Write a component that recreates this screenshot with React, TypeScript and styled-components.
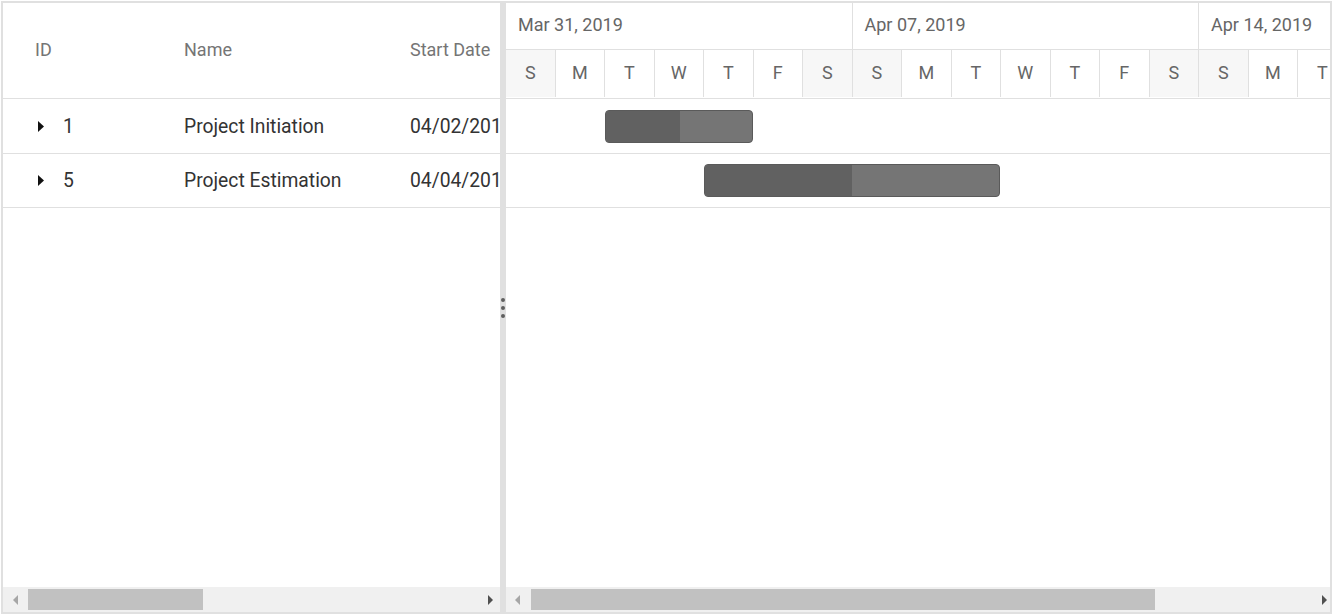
import React from "react";
import styled, { createGlobalStyle } from "styled-components";

const DAY = 49.5;

const Global = createGlobalStyle`
  html, body { margin: 0; padding: 0; background: #fff; }
  body { font-family: Roboto, "Liberation Sans", Arial, sans-serif; }
  * { box-sizing: border-box; }
`;

const Gantt = styled.div`
  margin: 1px;
  width: 1331px;
  height: 613px;
  border: 2px solid #e0e0e0;
  display: flex;
  background: #fff;
  overflow: hidden;
`;

const Pane = styled.div<{ $w: number }>`
  width: ${(p) => p.$w}px;
  flex: none;
  display: flex;
  flex-direction: column;
  overflow: hidden;
`;

const GridHeader = styled.div`
  height: 96px;
  flex: none;
  border-bottom: 1px solid #e0e0e0;
  padding-bottom: 3px;
  display: grid;
  grid-template-columns: 160px 226px 300px;
  align-items: center;
`;

const HeaderCell = styled.div<{ $pl: number }>`
  padding-left: ${(p) => p.$pl}px;
  font-size: 18px;
  color: #757575;
  white-space: nowrap;
`;

const GridRow = styled.div<{ $h: number }>`
  height: ${(p) => p.$h}px;
  flex: none;
  border-bottom: 1px solid #e0e0e0;
  display: grid;
  grid-template-columns: 160px 226px 300px;
  align-items: center;
`;

const Cell = styled.div<{ $pl: number }>`
  padding-left: ${(p) => p.$pl}px;
  font-size: 19.3px;
  color: #333;
  white-space: nowrap;
  display: flex;
  align-items: center;
`;

const Caret = styled.svg`
  width: 6px;
  height: 11px;
  margin-left: 3px;
  margin-right: 19px;
  flex: none;
`;

const Filler = styled.div`
  flex: 1;
`;

const ScrollBar = styled.div<{ $pl: number; $pr: number }>`
  height: 25px;
  flex: none;
  background: #f0f0f0;
  display: flex;
  align-items: center;
  padding: 0 ${(p) => p.$pr}px 0 ${(p) => p.$pl}px;
`;

const Arrow = styled.svg`
  width: 5px;
  height: 10px;
  flex: none;
`;

const Thumb = styled.div<{ $ml: number; $w: number }>`
  margin-left: ${(p) => p.$ml}px;
  width: ${(p) => p.$w}px;
  height: 21px;
  background: #c1c1c1;
  flex: none;
`;

const Splitter = styled.div`
  width: 6px;
  flex: none;
  background: #e0e0e0;
  display: flex;
  flex-direction: column;
  align-items: center;
  justify-content: center;
  gap: 4px;
`;

const Dot = styled.span`
  width: 4px;
  height: 4px;
  border-radius: 50%;
  background: #5f5f5f;
`;

const Timeline = styled.div`
  height: 96px;
  flex: none;
  border-bottom: 1px solid #e0e0e0;
  display: flex;
  flex-direction: column;
`;

const Tier = styled.div`
  display: flex;
  height: 47px;
  flex: none;
`;

const WeekCell = styled.div`
  width: ${DAY * 7}px;
  flex: none;
  border-right: 1px solid #e0e0e0;
  border-bottom: 1px solid #e0e0e0;
  padding: 0 0 3px 12px;
  display: flex;
  align-items: center;
  font-size: 18px;
  color: #666;
  white-space: nowrap;
`;

const DayCell = styled.div<{ $weekend: boolean }>`
  width: ${DAY}px;
  flex: none;
  border-right: 1px solid #e0e0e0;
  display: flex;
  align-items: center;
  justify-content: center;
  padding-bottom: 2px;
  font-size: 18px;
  color: #666;
  background: ${(p) => (p.$weekend ? "#f7f7f7" : "#fff")};
`;

const ChartRow = styled.div<{ $h: number }>`
  height: ${(p) => p.$h}px;
  flex: none;
  border-bottom: 1px solid #e0e0e0;
  position: relative;
`;

const Bar = styled.div`
  position: absolute;
  height: 33px;
  background: #757575;
  border: 1px solid #5a5a5a;
  border-radius: 4px;
  overflow: hidden;
`;

const Progress = styled.div`
  height: 100%;
  background: #616161;
`;

const weeks = ["Mar 31, 2019", "Apr 07, 2019", "Apr 14, 2019"];
const dayLetters = ["S", "M", "T", "W", "T", "F", "S"];

const tasks = [
  { id: 1, name: "Project Initiation", start: "04/02/2019", offset: 2, days: 3, progress: 0.51, h: 55, top: 11 },
  { id: 5, name: "Project Estimation", start: "04/04/2019", offset: 4, days: 6, progress: 0.5, h: 54, top: 10 },
];

const LeftArrow = ({ color }: { color: string }) => (
  <Arrow viewBox="0 0 5 10">
    <path d="M5 0 L0 5 L5 10 Z" fill={color} />
  </Arrow>
);
const RightArrow = ({ color }: { color: string }) => (
  <Arrow viewBox="0 0 5 10">
    <path d="M0 0 L5 5 L0 10 Z" fill={color} />
  </Arrow>
);

export default function App() {
  return (
    <>
      <Global />
      <Gantt>
        <Pane $w={497}>
          <GridHeader>
            <HeaderCell $pl={32}>ID</HeaderCell>
            <HeaderCell $pl={21}>Name</HeaderCell>
            <HeaderCell $pl={21}>Start Date</HeaderCell>
          </GridHeader>
          {tasks.map((t) => (
            <GridRow key={t.id} $h={t.h}>
              <Cell $pl={32}>
                <Caret viewBox="0 0 6 11">
                  <path d="M0 0 L6 5.5 L0 11 Z" fill="#111" />
                </Caret>
                {t.id}
              </Cell>
              <Cell $pl={21}>{t.name}</Cell>
              <Cell $pl={21}>{t.start}</Cell>
            </GridRow>
          ))}
          <Filler />
          <ScrollBar $pl={10} $pr={7}>
            <LeftArrow color="#a6a6a6" />
            <Thumb $ml={10} $w={175} />
            <Filler />
            <RightArrow color="#505050" />
          </ScrollBar>
        </Pane>
        <Splitter>
          <Dot />
          <Dot />
          <Dot />
        </Splitter>
        <Pane $w={824}>
          <Timeline>
            <Tier>
              {weeks.map((w) => (
                <WeekCell key={w}>{w}</WeekCell>
              ))}
            </Tier>
            <Tier>
              {weeks.flatMap((w) =>
                dayLetters.map((d, i) => (
                  <DayCell key={w + i} $weekend={i === 0 || i === 6}>
                    {d}
                  </DayCell>
                ))
              )}
            </Tier>
          </Timeline>
          {tasks.map((t) => (
            <ChartRow key={t.id} $h={t.h}>
              <Bar style={{ left: t.offset * DAY, top: t.top, width: t.days * DAY - 1 }}>
                <Progress style={{ width: `${t.progress * 100}%` }} />
              </Bar>
            </ChartRow>
          ))}
          <Filler />
          <ScrollBar $pl={9} $pr={3}>
            <LeftArrow color="#a6a6a6" />
            <Thumb $ml={11} $w={624} />
            <Filler />
            <RightArrow color="#505050" />
          </ScrollBar>
        </Pane>
      </Gantt>
    </>
  );
}
